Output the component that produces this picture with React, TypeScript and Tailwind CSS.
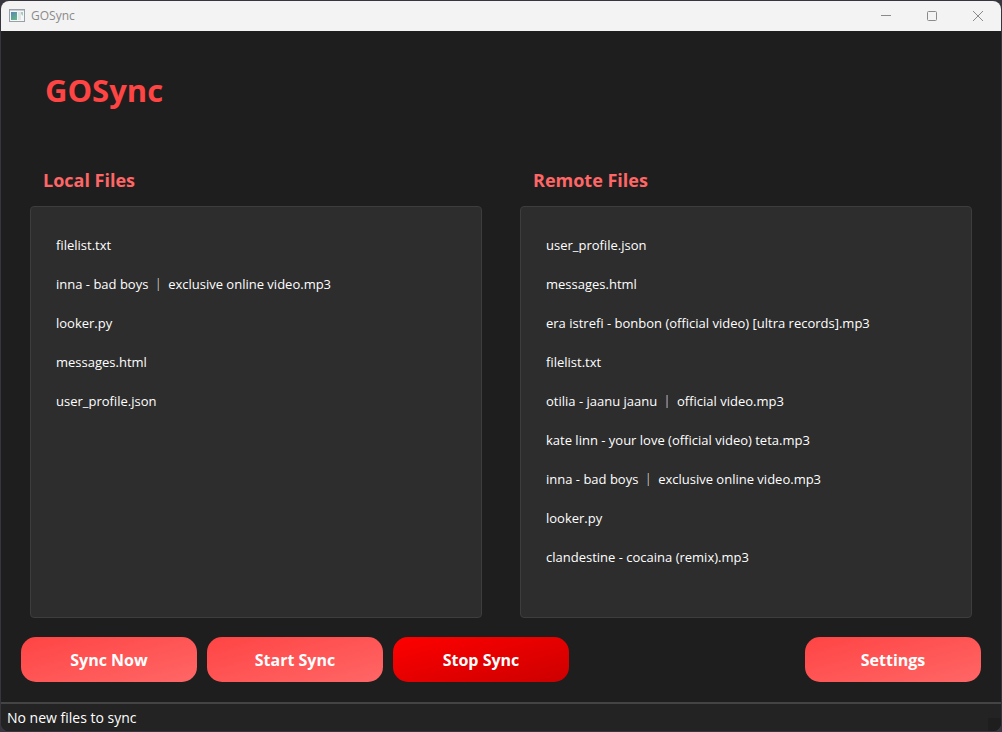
import React from "react";

const localFiles = [
  "filelist.txt",
  "inna - bad boys ｜ exclusive online video.mp3",
  "looker.py",
  "messages.html",
  "user_profile.json",
];

const remoteFiles = [
  "user_profile.json",
  "messages.html",
  "era istrefi - bonbon (official video) [ultra records].mp3",
  "filelist.txt",
  "otilia - jaanu jaanu ｜ official video.mp3",
  "kate linn - your love (official video) teta.mp3",
  "inna - bad boys ｜ exclusive online video.mp3",
  "looker.py",
  "clandestine - cocaina (remix).mp3",
];

function AppIcon() {
  return (
    <svg width="16" height="14" viewBox="0 0 16 14" aria-hidden="true">
      <defs>
        <linearGradient id="pane" x1="0" y1="0" x2="0.6" y2="1">
          <stop offset="0" stopColor="#5a83b8" />
          <stop offset="1" stopColor="#62b585" />
        </linearGradient>
      </defs>
      <rect x="0.5" y="0.5" width="15" height="12" fill="#f4f6f7" stroke="#9aa1a6" />
      <rect x="1" y="1" width="14" height="1" fill="#c5ccd2" />
      <rect x="2" y="3" width="6" height="8" fill="url(#pane)" />
      <rect x="9" y="3" width="3" height="8" fill="#e2e5e7" />
      <path d="M12 3H14V7L12 5Z" fill="#a5cdb9" />
    </svg>
  );
}

function TitleBar() {
  const control = "flex w-[46px] items-center justify-center text-[#8a8a8a]";
  return (
    <header className="flex h-[30px] shrink-0 items-stretch bg-[#f3f3f3]">
      <div className="flex flex-1 items-center gap-1.5 pl-2">
        <AppIcon />
        <span className="text-[12px] text-[#8a8a8a]">GOSync</span>
      </div>
      <button type="button" aria-label="Minimize" className={control}>
        <svg width="10" height="10" viewBox="0 0 10 10" stroke="currentColor">
          <path d="M0 4.5H10" />
        </svg>
      </button>
      <button type="button" aria-label="Maximize" className={control}>
        <svg width="10" height="10" viewBox="0 0 10 10" fill="none" stroke="currentColor">
          <rect x="0.5" y="0.5" width="9" height="9" rx="1" />
        </svg>
      </button>
      <button type="button" aria-label="Close" className={control}>
        <svg width="10" height="10" viewBox="0 0 10 10" stroke="currentColor">
          <path d="M0 0L10 10M10 0L0 10" />
        </svg>
      </button>
    </header>
  );
}

function FilePanel({ title, files }: { title: string; files: string[] }) {
  return (
    <section className="flex min-w-0 flex-1 flex-col px-[9px]">
      <h2 className="px-[13px] text-[18px] leading-6 font-bold text-[#ff6666]">{title}</h2>
      <ul className="mt-[14px] flex-1 rounded-[4px] border border-[#3d3d3d] bg-[#2d2d2d] px-[25px] py-[19px]">
        {files.map((file) => (
          <li key={file} className="truncate text-[13px] leading-[39px] text-white">
            {file}
          </li>
        ))}
      </ul>
    </section>
  );
}

function ActionButton({ label, danger = false }: { label: string; danger?: boolean }) {
  const colors = danger
    ? "bg-[linear-gradient(to_bottom_right,#ff0000,#cc0000)]"
    : "bg-[linear-gradient(to_bottom_right,#ff4444,#ff6666)]";
  return (
    <button
      type="button"
      className={`h-[45px] w-44 rounded-[15px] text-[16px] font-bold text-white ${colors}`}
    >
      {label}
    </button>
  );
}

export default function App() {
  return (
    <div className="flex min-h-screen flex-col bg-[#37353d] p-px font-['Open_Sans','Noto_Sans','Noto_Sans_CJK_JP',sans-serif]">
      <div className="flex flex-1 flex-col overflow-hidden rounded-lg bg-[#1e1e1e]">
        <TitleBar />
        <main className="flex flex-1 flex-col px-5 pb-5">
          <h1 className="px-6 pt-10 text-[31px] leading-[38px] font-bold text-[#ff4444]">GOSync</h1>
          <div className="mt-[59px] flex flex-1 gap-5">
            <FilePanel title="Local Files" files={localFiles} />
            <FilePanel title="Remote Files" files={remoteFiles} />
          </div>
          <div className="mt-[19px] flex gap-2.5">
            <ActionButton label="Sync Now" />
            <ActionButton label="Start Sync" />
            <ActionButton label="Stop Sync" danger />
            <div className="flex-1" />
            <ActionButton label="Settings" />
          </div>
        </main>
        <footer className="flex h-[29px] shrink-0 items-end justify-between border-t-2 border-[#444444] bg-[#232323] pl-1.5 text-[14px] leading-[27px] text-white">
          <span>No new files to sync</span>
          <span className="size-[13px] bg-[#1e1e1e]" />
        </footer>
      </div>
    </div>
  );
}
